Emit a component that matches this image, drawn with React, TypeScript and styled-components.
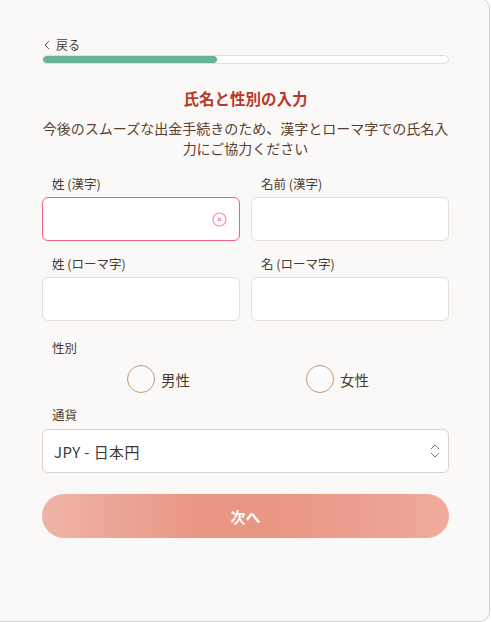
import React from "react";
import styled, { createGlobalStyle } from "styled-components";

const GlobalStyle = createGlobalStyle`
  html, body {
    margin: 0;
    padding: 0;
    background: #ffffff;
    overflow: hidden;
  }
  body {
    font-family: "Noto Sans CJK JP", "Noto Sans", sans-serif;
  }
`;

const Card = styled.div`
  box-sizing: border-box;
  width: 501px;
  height: 624px;
  margin: -2px 0 0 -11px;
  padding: 37px 40px 0 52px;
  background: #faf9f8;
  border: 1px solid #d2d2d2;
  border-radius: 10px;
  color: #4a3b30;
`;

const BackLink = styled.div`
  display: flex;
  align-items: center;
  gap: 6px;
  height: 18px;
  padding-left: 2px;
  font-size: 12px;
  line-height: 18px;
  color: #4a3b30;
`;

const Progress = styled.div`
  box-sizing: border-box;
  height: 9px;
  margin-top: 1px;
  background: #ffffff;
  border: 1px solid #e2e0de;
  border-radius: 5px;
  overflow: hidden;
`;

const ProgressFill = styled.div<{ $pct: number }>`
  width: ${(p) => p.$pct}%;
  height: 100%;
  background: #68b393;
  border-radius: 5px;
`;

const Title = styled.h1`
  margin: 23px 0 0;
  font-size: 15.5px;
  line-height: 22px;
  font-weight: 700;
  text-align: center;
  color: #b8392a;
`;

const Lead = styled.p`
  margin: 9px 0 0;
  font-size: 14px;
  line-height: 20px;
  text-align: center;
  color: #5a4030;
`;

const FieldGrid = styled.div`
  display: grid;
  grid-template-columns: 1fr 1fr;
  column-gap: 11px;
  row-gap: 14px;
  margin-top: 17px;
`;

const Field = styled.div`
  display: flex;
  flex-direction: column;
  gap: 4px;
`;

const Label = styled.label`
  padding-left: 10px;
  font-size: 12.5px;
  line-height: 18px;
  color: #4a3b30;
`;

const InputBox = styled.div<{ $active?: boolean }>`
  position: relative;
  box-sizing: border-box;
  height: 44px;
  background: #ffffff;
  border: 1px solid ${(p) => (p.$active ? "#f2617f" : "#e3dfdb")};
  border-radius: 6px;
`;

const ClearIcon = styled.svg`
  position: absolute;
  right: 12px;
  top: 14px;
`;

const Section = styled.div<{ $top: number }>`
  display: flex;
  flex-direction: column;
  margin-top: ${(p) => p.$top}px;
`;

const RadioRow = styled.div`
  display: flex;
  justify-content: center;
  gap: 116px;
  margin-top: 8px;
  padding-left: 5px;
`;

const RadioOption = styled.div`
  display: flex;
  align-items: center;
  gap: 6px;
  font-size: 14.5px;
  color: #4a3b30;
`;

const RadioCircle = styled.span`
  box-sizing: border-box;
  width: 28px;
  height: 28px;
  border-radius: 50%;
  border: 1.5px solid #c9976c;
  background: #fcfbfa;
`;

const Select = styled.div`
  box-sizing: border-box;
  display: flex;
  align-items: center;
  justify-content: space-between;
  height: 44px;
  margin-top: 5px;
  padding: 0 7px 0 11px;
  background: #ffffff;
  border: 1px solid #dcd3cc;
  border-radius: 6px;
  font-size: 15px;
  letter-spacing: 0.4px;
  color: #3a3a3a;
`;

const NextButton = styled.button`
  display: block;
  width: 100%;
  height: 44px;
  margin-top: 21px;
  border: none;
  border-radius: 22px;
  background: linear-gradient(
    90deg,
    #eeb4a7 0%,
    #eba495 20%,
    #e99684 38%,
    #e99886 62%,
    #eda192 82%,
    #f0ab9c 100%
  );
  color: #ffffff;
  font-family: inherit;
  font-size: 15px;
  font-weight: 700;
`;

export default function App() {
  return (
    <>
      <GlobalStyle />
      <Card>
        <BackLink>
          <svg width="6" height="10" viewBox="0 0 6 10">
            <path d="M5 1 L1 5 L5 9" fill="none" stroke="#6a5a50" strokeWidth="1" />
          </svg>
          戻る
        </BackLink>
        <Progress>
          <ProgressFill $pct={43} />
        </Progress>

        <Title>氏名と性別の入力</Title>
        <Lead>
          今後のスムーズな出金手続きのため、漢字とローマ字での氏名入
          <br />
          力にご協力ください
        </Lead>

        <FieldGrid>
          <Field>
            <Label>姓 (漢字)</Label>
            <InputBox $active>
              <ClearIcon width="15" height="15" viewBox="0 0 15 15">
                <circle cx="7.5" cy="7.5" r="6.5" fill="none" stroke="#f28ca0" strokeWidth="1.2" />
                <path d="M5.8 5.8 L9.2 9.2 M9.2 5.8 L5.8 9.2" stroke="#f28ca0" strokeWidth="1.1" />
              </ClearIcon>
            </InputBox>
          </Field>
          <Field>
            <Label>名前 (漢字)</Label>
            <InputBox />
          </Field>
          <Field>
            <Label>姓 (ローマ字)</Label>
            <InputBox />
          </Field>
          <Field>
            <Label>名 (ローマ字)</Label>
            <InputBox />
          </Field>
        </FieldGrid>

        <Section $top={18}>
          <Label>性別</Label>
          <RadioRow>
            <RadioOption>
              <RadioCircle />
              男性
            </RadioOption>
            <RadioOption>
              <RadioCircle />
              女性
            </RadioOption>
          </RadioRow>
        </Section>

        <Section $top={13}>
          <Label>通貨</Label>
          <Select>
            <span>JPY - 日本円</span>
            <svg width="12" height="16" viewBox="0 0 12 16">
              <path
                d="M2 6 L6 2 L10 6 M2 10 L6 14 L10 10"
                fill="none"
                stroke="#7a7a7a"
                strokeWidth="1"
              />
            </svg>
          </Select>
        </Section>

        <NextButton>次へ</NextButton>
      </Card>
    </>
  );
}
